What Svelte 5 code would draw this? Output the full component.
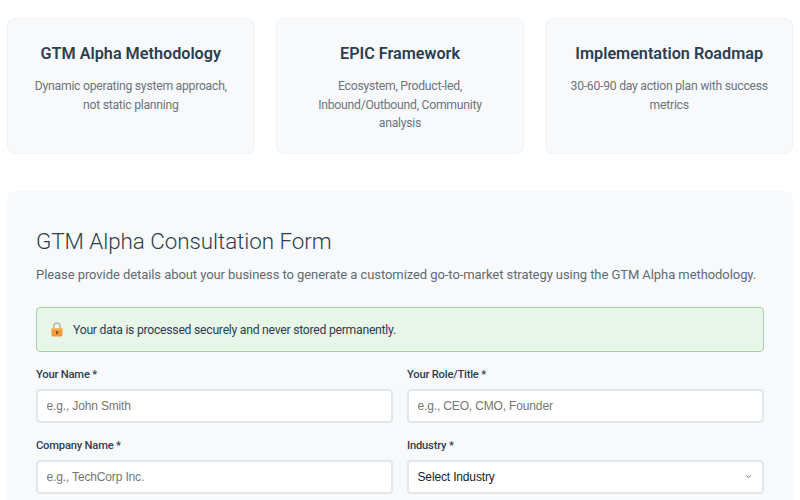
<script>
  const cards = [
    { title: 'GTM Alpha Methodology', text: 'Dynamic operating system approach, not static planning' },
    { title: 'EPIC Framework', text: 'Ecosystem, Product-led, Inbound/Outbound, Community analysis' },
    { title: 'Implementation Roadmap', text: '30-60-90 day action plan with success metrics' }
  ];
</script>

<div class="page">
  <div class="cards">
    {#each cards as c}
      <div class="card">
        <h3>{c.title}</h3>
        <p>{c.text}</p>
      </div>
    {/each}
  </div>

  <section class="form">
    <h2>GTM Alpha Consultation Form</h2>
    <p class="intro">Please provide details about your business to generate a customized go-to-market strategy using the GTM Alpha methodology.</p>
    <div class="notice">
      <svg class="lock" width="12" height="15" viewBox="0 0 12 15">
        <path d="M2.8 7V4.2a3.2 3.2 0 0 1 6.4 0V7" fill="none" stroke="#b9b4ab" stroke-width="1.5"/>
        <rect x="0.5" y="6" width="11" height="8.5" rx="1.4" fill="#ee9a3c"/>
        <rect x="0.5" y="6" width="11" height="1.8" rx="0.9" fill="#f6b660"/>
        <rect x="5.1" y="9" width="1.8" height="3.2" rx="0.9" fill="#6b3f1a"/>
      </svg>
      <span>Your data is processed securely and never stored permanently.</span>
    </div>
    <div class="grid">
      <div class="field">
        <label for="name">Your Name *</label>
        <input id="name" placeholder="e.g., John Smith" />
      </div>
      <div class="field">
        <label for="role">Your Role/Title *</label>
        <input id="role" placeholder="e.g., CEO, CMO, Founder" />
      </div>
      <div class="field">
        <label for="company">Company Name *</label>
        <input id="company" placeholder="e.g., TechCorp Inc." />
      </div>
      <div class="field">
        <label for="industry">Industry *</label>
        <div class="select">
          <select id="industry"><option>Select Industry</option></select>
          <svg width="7" height="5" viewBox="0 0 7 5"><path d="M1 1.2l2.5 2.5L6 1.2" fill="none" stroke="#777" stroke-width="1"/></svg>
        </div>
      </div>
    </div>
  </section>
</div>

<style>
  :global(body) {
    margin: 0;
    background: #fff;
    overflow: hidden;
  }
  .page {
    height: 500px;
    overflow: hidden;
    box-sizing: border-box;
    padding: 18px 7px 0;
    font-family: Roboto, "Noto Sans", sans-serif;
    color: #2c3e50;
  }
  .cards {
    display: grid;
    grid-template-columns: repeat(3, 1fr);
    gap: 21.6px;
    margin-bottom: 37px;
  }
  .card {
    box-sizing: border-box;
    height: 136px;
    padding: 24px 22px;
    background: #f8f9fa;
    border: 1px solid #f1f3f5;
    border-radius: 8px;
    text-align: center;
  }
  h3 {
    margin: 0 0 12px;
    font-size: 16.2px;
    font-weight: 600;
    line-height: 22px;
    color: #2c3e50;
  }
  .card p {
    margin: 0;
    font-size: 12.2px;
    letter-spacing: -0.25px;
    line-height: 18.5px;
    color: #6c757d;
  }
  .form {
    box-sizing: border-box;
    height: 340px;
    padding: 35px 29px 0;
    background: #f8f9fa;
    border-radius: 8px;
  }
  h2 {
    margin: 0 0 9px;
    font-size: 22.4px;
    letter-spacing: -0.05px;
    font-weight: 300;
    line-height: 30px;
    color: #2c3e50;
  }
  .intro {
    margin: 0 0 22px;
    font-size: 13px;
    letter-spacing: -0.07px;
    line-height: 20px;
    white-space: nowrap;
    color: #5f6b75;
  }
  .notice {
    box-sizing: border-box;
    height: 45px;
    display: flex;
    align-items: center;
    gap: 10px;
    padding: 0 14px;
    margin-bottom: 15px;
    background: #e8f5e9;
    border: 1px solid #a5cfa8;
    border-radius: 4px;
    font-size: 12.2px;
    letter-spacing: -0.25px;
    color: #2c3e50;
  }
  .lock { flex: none; margin-top: -1px; }
  .grid {
    display: grid;
    grid-template-columns: 1fr 1fr;
    column-gap: 14px;
    row-gap: 15px;
  }
  .field { display: flex; flex-direction: column; min-width: 0; }
  label {
    font-size: 11.2px;
    letter-spacing: -0.2px;
    font-weight: 500;
    line-height: 16px;
    margin-bottom: 6px;
    color: #2c3e50;
  }
  input, select {
    box-sizing: border-box;
    width: 100%;
    height: 34px;
    padding: 0 8.5px;
    border: 2px solid #e4e7ea;
    border-radius: 4px;
    background-color: #fff;
    font-family: "Liberation Sans", Arial, sans-serif;
    font-size: 12px;
    letter-spacing: -0.15px;
    color: #222;
    outline: none;
  }
  select { appearance: none; }
  input::placeholder { color: #757575; opacity: 1; }
  .select { position: relative; }
  .select svg { position: absolute; right: 12px; top: 14px; }
</style>
